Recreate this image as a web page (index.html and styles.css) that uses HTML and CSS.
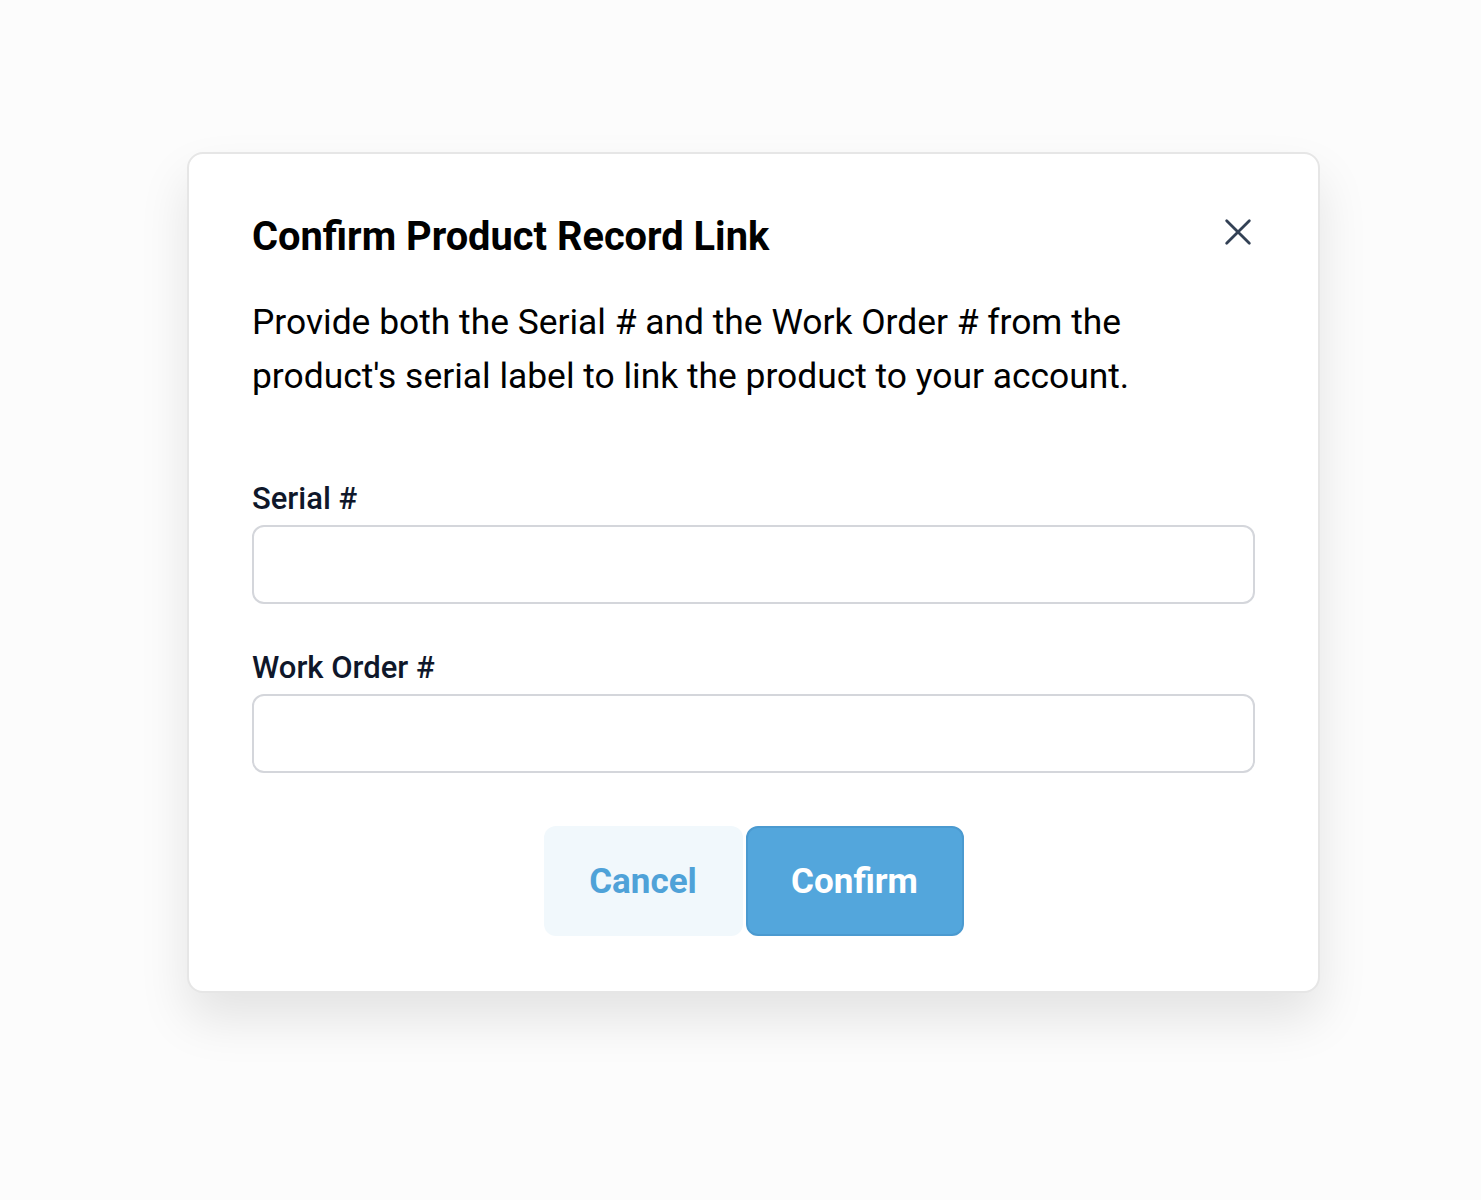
FILE: index.html
```html
<!DOCTYPE html>
<html lang="en">
<head>
  <meta charset="UTF-8" />
  <meta name="viewport" content="width=device-width, initial-scale=1.0"/>
  <title>Confirm Product Record Link</title>
  <link rel="stylesheet" href="styles.css">
</head>
<body>
  <div class="modal">
    <div class="modal-header">
      <h2>Confirm Product Record Link</h2>
      <button class="close-btn" aria-label="Close">
        <svg width="32" height="32" viewBox="0 0 24 24" fill="none" stroke="#334155" stroke-width="2.1" stroke-linecap="round">
          <path d="M3.5 3.5L20.5 20.5M20.5 3.5L3.5 20.5"/>
        </svg>
      </button>
    </div>
    <p class="intro">Provide both the Serial # and the Work Order # from the product's serial label to link the product to your account.</p>

    <form class="fields">
      <div class="field">
        <label for="serial">Serial #</label>
        <input type="text" id="serial">
      </div>
      <div class="field">
        <label for="work-order">Work Order #</label>
        <input type="text" id="work-order">
      </div>
      <div class="actions">
        <button type="button" class="btn btn-cancel">Cancel</button>
        <button type="button" class="btn btn-confirm">Confirm</button>
      </div>
    </form>
  </div>
</body>
</html>
```

FILE: styles.css
```css
html {
  background-color: #fcfcfc;
}

body {
  font-family: Roboto, "Liberation Sans", sans-serif;
  margin: 0;
  min-height: 100vh;
  box-sizing: border-box;
  padding: 152px 0 0 187px;
}

.modal {
  width: 1133px;
  box-sizing: border-box;
  background: #fff;
  border: 2px solid #e6e6e6;
  border-radius: 16px;
  padding: 58px 63px 55px 63px;
  box-shadow: 0 26px 50px rgba(0, 0, 0, 0.1);
}

.modal-header {
  display: flex;
  justify-content: space-between;
  align-items: flex-start;
}

.modal-header h2 {
  margin: 0;
  font-size: 39.8px;
  font-weight: 700;
  line-height: 50px;
  color: #000;
}

.close-btn {
  background: none;
  border: none;
  padding: 0;
  margin: 4px 1px 0 0;
  cursor: pointer;
}

.intro {
  margin: 33px 0 0;
  font-size: 35.4px;
  line-height: 54px;
  color: #000;
}

.fields {
  margin-top: 76px;
}

.field {
  display: flex;
  flex-direction: column;
  margin-bottom: 44px;
}

.field label {
  font-size: 31px;
  font-weight: 500;
  color: #0f172a;
  line-height: 40px;
  margin-bottom: 6px;
}

.field input {
  height: 79px;
  box-sizing: border-box;
  border: 2px solid #d4d6db;
  border-radius: 12px;
  font-size: 28px;
  padding: 0 20px;
  font-family: inherit;
}

.actions {
  display: flex;
  justify-content: center;
  gap: 3px;
  margin-top: 53px;
}

.btn {
  height: 110px;
  border-radius: 12px;
  font-family: inherit;
  font-size: 35px;
  font-weight: 700;
  cursor: pointer;
}

.btn-cancel {
  width: 199px;
  background: #f1f8fc;
  border: none;
  color: #4fa2d8;
}

.btn-confirm {
  width: 218px;
  background: #53a6dc;
  border: 2px solid #4b9ad0;
  color: #fff;
}
```
